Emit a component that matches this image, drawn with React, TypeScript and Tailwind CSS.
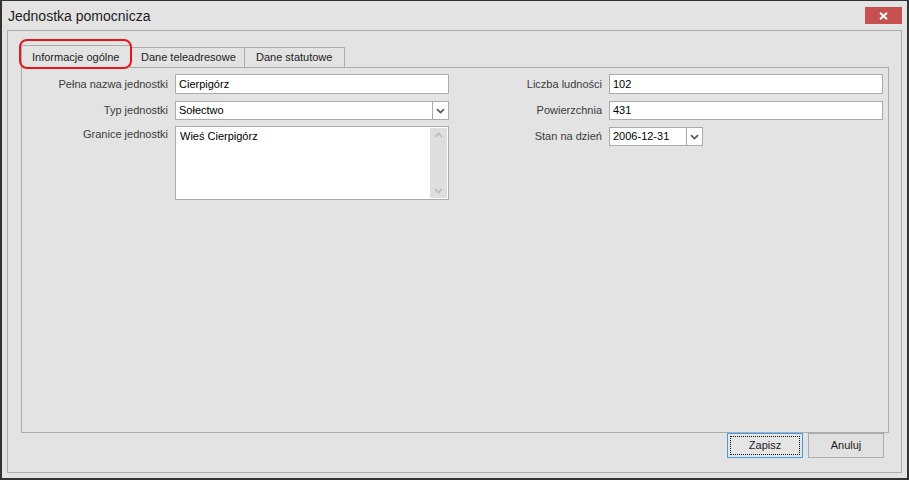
import React from "react";

const Chevron = ({ up = false, color = "#5a5a5a" }: { up?: boolean; color?: string }) => (
  <svg width="9" height="6" viewBox="0 0 9 6" className={up ? "rotate-180" : ""}>
    <path d="M1 1.2 L4.5 4.6 L8 1.2" fill="none" stroke={color} strokeWidth="1.8" />
  </svg>
);

function TextField({ value, className = "" }: { value: string; className?: string }) {
  return (
    <div className={`flex items-center bg-white border border-[#ababab] pl-[3px] text-[11px] text-black ${className}`}>
      {value}
    </div>
  );
}

function Combo({ value, className = "" }: { value: string; className?: string }) {
  return (
    <div className={`flex bg-white border border-[#ababab] text-[11px] text-black ${className}`}>
      <div className="flex-1 flex items-center pl-[3px]">{value}</div>
      <div className="w-[16px] border-l border-[#ababab] flex items-center justify-center">
        <Chevron />
      </div>
    </div>
  );
}

function Label({ text }: { text: string }) {
  return <div className="text-right text-[11px] text-[#3c3c3c] leading-none">{text}</div>;
}

export default function App() {
  return (
    <div className="w-[909px] h-[480px] bg-[#e3e3e3] border-[#333333] border-t border-l-2 border-r-2 border-b-2 flex flex-col font-['Liberation_Sans',Arial,sans-serif]">
      {/* title bar */}
      <div className="h-[29px] flex items-start justify-between">
        <div className="pl-[6px] pt-[5px] text-[14px] text-[#1e1e1e]">Jednostka pomocnicza</div>
        <button className="mt-[6px] mr-[5px] w-[37px] h-[17px] bg-[#c75050] flex items-center justify-center">
          <svg width="9" height="8" viewBox="0 0 9 8">
            <path d="M1 0.8 L8 7.2 M8 0.8 L1 7.2" stroke="#ffffff" strokeWidth="2" />
          </svg>
        </button>
      </div>

      {/* frame */}
      <div className="flex-1 mx-[5px] mb-[5px] border border-[#adadad] flex flex-col pl-[13px] pr-[12px] pt-[14px] pb-[14px]">
        {/* tabs */}
        <div className="h-[22px] flex items-end">
          <div className="relative h-[23px] w-[110px] -mb-px bg-[#e3e3e3] border border-b-0 border-[#acacac] flex items-center pl-[10px] text-[11px] text-[#222] z-10">
            Informacje ogólne
            <div className="absolute -left-[3px] -top-[7px] w-[113px] h-[30px] rounded-[8px] border-[2.5px] border-[#e8161c]" />
          </div>
          <div className="h-[20px] w-[114px] border border-l-0 border-b-0 border-[#acacac] flex items-center pl-[10px] text-[11px] text-[#222]">
            Dane teleadresowe
          </div>
          <div className="h-[20px] w-[100px] border border-l-0 border-b-0 border-[#acacac] flex items-center pl-[11px] text-[11px] text-[#222]">
            Dane statutowe
          </div>
        </div>

        {/* panel */}
        <div className="h-[366px] border border-[#acacac] flex pt-[6px]">
          <div className="w-[427px] grid grid-cols-[146px_274px] gap-x-[7px] content-start">
            <div className="h-[20px] flex items-center justify-end"><Label text="Pełna nazwa jednostki" /></div>
            <TextField value="Cierpigórz" className="h-[20px]" />
            <div className="mt-[7px] h-[19px] flex items-center justify-end"><Label text="Typ jednostki" /></div>
            <Combo value="Sołectwo" className="mt-[7px] h-[19px]" />
            <div className="mt-[6px] h-[16px] flex items-center justify-end"><Label text="Granice jednostki" /></div>
            <div className="mt-[6px] h-[74px] bg-white border border-[#ababab] flex">
              <div className="flex-1 pl-[4px] pt-[1px] text-[11px] text-black">Wieś Cierpigórz</div>
              <div className="w-[17px] my-[1px] mr-[1px] bg-[#dedede] flex flex-col items-center justify-between py-[4px]">
                <Chevron up color="#bdbdbd" />
                <Chevron color="#bdbdbd" />
              </div>
            </div>
          </div>
          <div className="w-[434px] grid grid-cols-[153px_274px] gap-x-[7px] content-start">
            <div className="h-[20px] flex items-center justify-end"><Label text="Liczba ludności" /></div>
            <TextField value="102" className="h-[20px]" />
            <div className="mt-[7px] h-[19px] flex items-center justify-end"><Label text="Powierzchnia" /></div>
            <TextField value="431" className="mt-[7px] h-[19px]" />
            <div className="mt-[7px] h-[19px] flex items-center justify-end"><Label text="Stan na dzień" /></div>
            <Combo value="2006-12-31" className="mt-[7px] h-[19px] w-[94px]" />
          </div>
        </div>

        {/* buttons */}
        <div className="flex justify-end gap-[5px] pr-[5px]">
          <button className="w-[76px] h-[25px] bg-[#e5e5e5] border border-[#3c9cf4] p-[2px]">
            <div className="w-full h-full border border-dotted border-[#111] flex items-center justify-center text-[11px] text-[#222]">
              Zapisz
            </div>
          </button>
          <button className="w-[76px] h-[25px] bg-[#e1e1e1] border border-[#adadad] flex items-center justify-center text-[11px] text-[#222]">
            Anuluj
          </button>
        </div>
      </div>
    </div>
  );
}
